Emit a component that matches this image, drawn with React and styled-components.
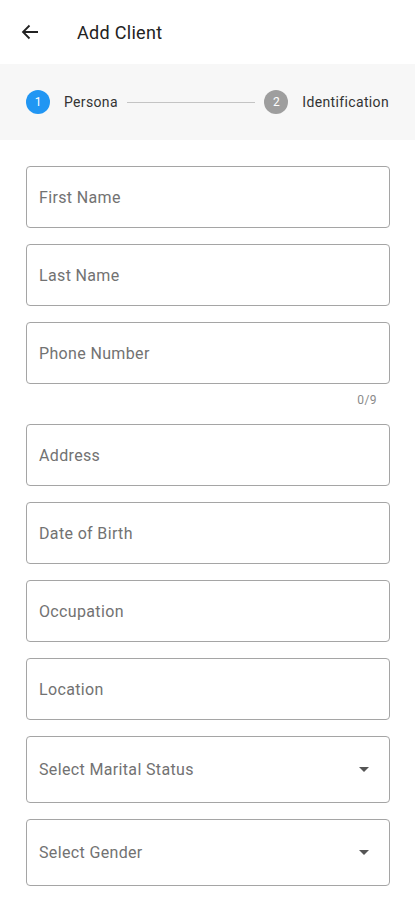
import React from "react";
import styled, {createGlobalStyle} from "styled-components";

const Global = createGlobalStyle`
body {
    margin: 0;
    background: #ffffff;
    font-family: Roboto, "Noto Sans", sans-serif;
}
`;

const Page = styled.div`
width: 415px;
min-height: 900px;
background: #ffffff;
`;

const Header = styled.div`
height: 64px;
display: flex;
align-items: center;
padding-left: 18px;
`;

const BackButton = styled.div`
width: 24px;
height: 24px;
display: flex;
align-items: center;
justify-content: center;
margin-right: 35px;
`;

const Title = styled.div`
font-size: 18px;
letter-spacing: 0.3px;
color: #222222;
`;

const Stepper = styled.div`
height: 76px;
background: #f7f7f7;
display: flex;
align-items: center;
padding: 0 26px;
`;

const Step = styled.div`
display: flex;
align-items: center;
`;

const Circle = styled.div`
width: 24px;
height: 24px;
border-radius: 50%;
background: ${props => props.active ? "#2196f3" : "#9e9e9e"};
color: #ffffff;
font-size: 12px;
display: flex;
align-items: center;
justify-content: center;
margin-right: 14px;
`;

const StepLabel = styled.div`
font-size: 14px;
letter-spacing: 0.35px;
color: #333333;
`;

const Connector = styled.div`
flex-grow: 1;
height: 1px;
background: #c4c4c4;
margin: 0 9px;
`;

const Form = styled.div`
padding: 26px 25px 0 26px;
display: flex;
flex-direction: column;
`;

const Field = styled.div`
height: ${props => props.tall ? "67px" : "62px"};
box-sizing: border-box;
border: 1px solid #a5a5a5;
border-radius: 4px;
display: flex;
align-items: center;
justify-content: space-between;
padding: 0 20px 0 12px;
margin-bottom: ${props => props.tight ? "0" : "16px"};
`;

const Placeholder = styled.span`
font-size: 16px;
letter-spacing: 0.35px;
color: #727272;
`;

const Counter = styled.div`
height: 40px;
box-sizing: border-box;
padding-top: 9px;
padding-right: 13px;
text-align: right;
font-size: 12px;
letter-spacing: 0.4px;
color: #8a8a8a;
`;

const Caret = () => (
    <svg width="10" height="5" viewBox="0 0 10 5">
        <path d="M0 0 L5 5 L10 0 Z" fill="#555555"/>
    </svg>
);

const fields = [
    {label: "First Name"},
    {label: "Last Name"},
    {label: "Phone Number", counter: "0/9"},
    {label: "Address"},
    {label: "Date of Birth"},
    {label: "Occupation"},
    {label: "Location"},
    {label: "Select Marital Status", select: true},
    {label: "Select Gender", select: true},
];

export default function App() {
    return <Page>
        <Global/>
        <Header>
            <BackButton>
                <svg width="18" height="16" viewBox="0 0 18 16">
                    <path d="M17 8 H2 M8.5 1.5 L2 8 L8.5 14.5" stroke="#222222" strokeWidth="1.8" fill="none"/>
                </svg>
            </BackButton>
            <Title>Add Client</Title>
        </Header>
        <Stepper>
            <Step>
                <Circle active>1</Circle>
                <StepLabel>Persona</StepLabel>
            </Step>
            <Connector/>
            <Step>
                <Circle>2</Circle>
                <StepLabel>Identification</StepLabel>
            </Step>
        </Stepper>
        <Form>
            {fields.map(f => <React.Fragment key={f.label}>
                <Field tall={f.select} tight={!!f.counter}>
                    <Placeholder>{f.label}</Placeholder>
                    {f.select && <Caret/>}
                </Field>
                {f.counter && <Counter>{f.counter}</Counter>}
            </React.Fragment>)}
        </Form>
    </Page>;
}
